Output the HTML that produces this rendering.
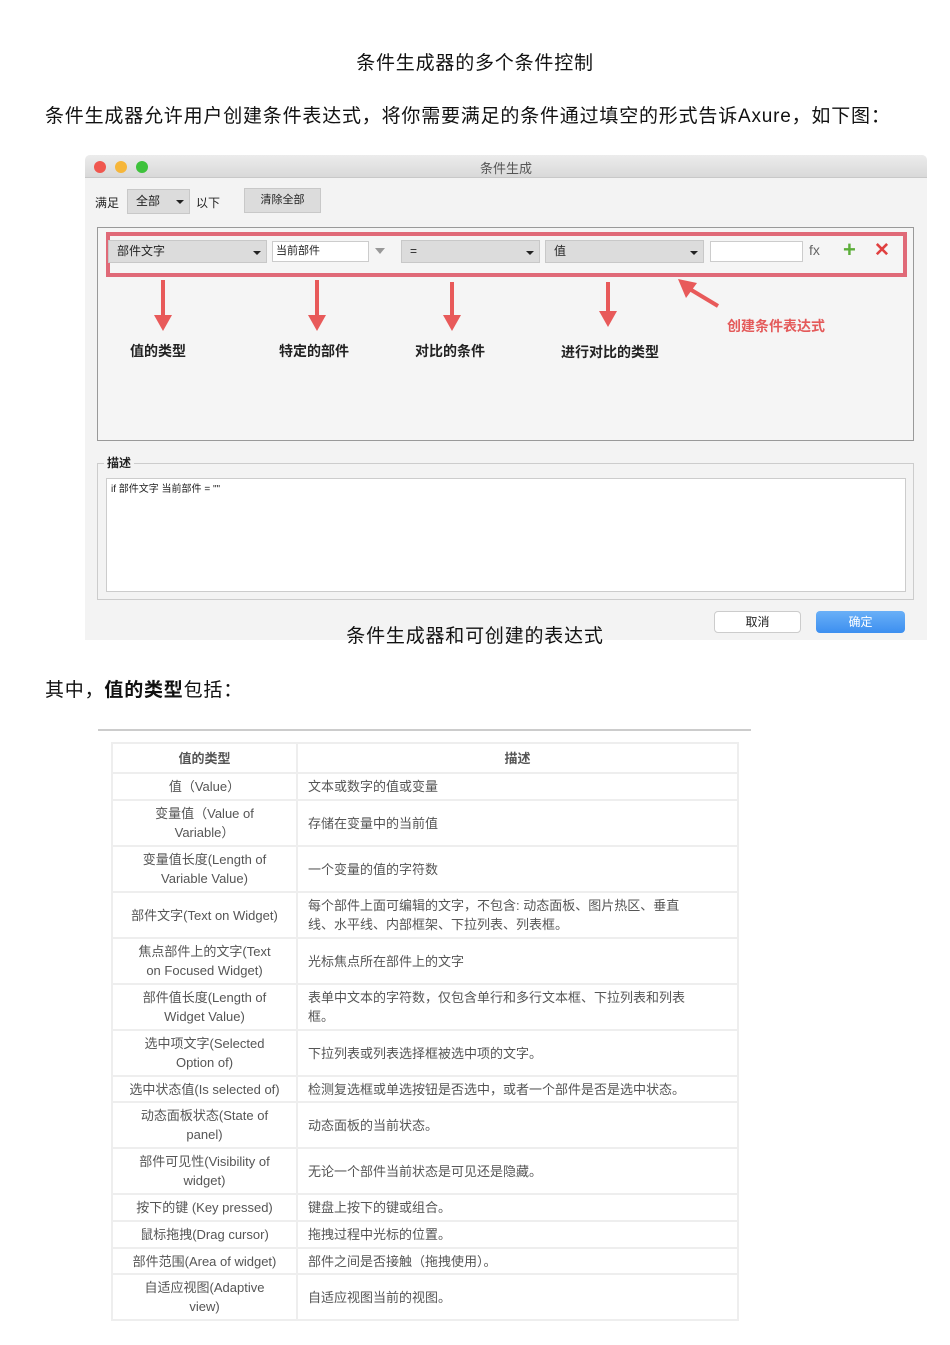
<!DOCTYPE html>
<html><head><meta charset="utf-8">
<style>
*{margin:0;padding:0;box-sizing:border-box}
body{width:950px;height:1345px;background:#fff;position:relative;font-family:"Liberation Sans","Noto Sans CJK SC",sans-serif;color:#111;overflow:hidden}
.a{position:absolute;white-space:nowrap}
.sel{position:absolute;background:#dcdcdc;border:1px solid #c8c8c8;font-size:12px;line-height:21px;padding-left:8px;color:#222}
.sel:after{content:"";position:absolute;right:5px;top:10px;border-left:4px solid transparent;border-right:4px solid transparent;border-top:4px solid #222}
.inp{position:absolute;background:#fff;border:1px solid #ccc;font-size:11px;line-height:18px;padding-left:3px;color:#222}
.lbl{position:absolute;font-size:14px;font-weight:bold;color:#222;white-space:nowrap}
table{position:absolute;left:111px;top:742px;width:628px;border-collapse:collapse;font-size:13px;color:#555}
td{border:2px solid #eee;padding:0 34px 0 10px;line-height:19px}
td:first-child{width:185px;text-align:center;padding:0 18px}
</style></head><body>
<div class="a" style="left:0;width:950px;text-align:center;top:48px;font-size:19px;letter-spacing:0.8px">条件生成器的多个条件控制</div>
<div class="a" style="left:45px;top:101px;font-size:19px;letter-spacing:0.8px">条件生成器允许用户创建条件表达式，将你需要满足的条件通过填空的形式告诉Axure，如下图：</div>

<div class="a" style="left:85px;top:155px;width:842px;height:485px;background:#f3f3f3;border-radius:5px 5px 0 0;overflow:hidden">
 <div class="a" style="left:0;top:0;width:842px;height:23px;background:linear-gradient(#ececec,#d9d9d9);border-bottom:1px solid #c8c8c8"></div>
 <div class="a" style="left:9px;top:6px;width:12px;height:12px;border-radius:50%;background:#f0574f"></div>
 <div class="a" style="left:30px;top:6px;width:12px;height:12px;border-radius:50%;background:#f6b63a"></div>
 <div class="a" style="left:51px;top:6px;width:12px;height:12px;border-radius:50%;background:#3ec23c"></div>
 <div class="a" style="left:0;width:842px;text-align:center;top:3px;font-size:13px;color:#555">条件生成</div>
 <div class="a" style="left:10px;top:39px;font-size:12px;color:#222">满足</div>
 <div class="sel" style="left:42px;top:34px;width:63px;height:25px;line-height:23px">全部</div>
 <div class="a" style="left:111px;top:39px;font-size:12px;color:#222">以下</div>
 <div class="a" style="left:159px;top:33px;width:77px;height:25px;background:#dcdcdc;border:1px solid #c8c8c8;font-size:11px;text-align:center;line-height:23px;color:#222">清除全部</div>
 <div class="a" style="left:12px;top:72px;width:817px;height:214px;border:1px solid #999;background:#f5f5f5"></div>
 <div class="a" style="left:21px;top:77px;width:801px;height:45px;border:4px solid #e06a78"></div>
 <div class="sel" style="left:23px;top:85px;width:159px;height:23px">部件文字</div>
 <div class="inp" style="left:187px;top:86px;width:97px;height:21px">当前部件</div>
 <div class="a" style="left:290px;top:93px;border-left:5px solid transparent;border-right:5px solid transparent;border-top:6px solid #999"></div>
 <div class="sel" style="left:316px;top:85px;width:139px;height:23px">=</div>
 <div class="sel" style="left:460px;top:85px;width:159px;height:23px">值</div>
 <div class="inp" style="left:625px;top:86px;width:93px;height:21px"></div>
 <div class="a" style="left:724px;top:87px;font-size:14px;color:#666">fx</div>
 <div class="a" style="left:758px;top:82px;font-size:22px;font-weight:bold;color:#5cae3a">+</div>
 <div class="a" style="left:789px;top:84px;font-size:19px;font-weight:bold;color:#e04040">✕</div>
 <svg class="a" style="left:0;top:0" width="842" height="220">
  <g stroke="#e85a5a" stroke-width="4" fill="#e85a5a">
   <line x1="78" y1="125" x2="78" y2="165"/><polygon points="69,160 87,160 78,176" stroke="none"/>
   <line x1="232" y1="125" x2="232" y2="165"/><polygon points="223,160 241,160 232,176" stroke="none"/>
   <line x1="367" y1="127" x2="367" y2="165"/><polygon points="358,160 376,160 367,176" stroke="none"/>
   <line x1="523" y1="127" x2="523" y2="161"/><polygon points="514,156 532,156 523,172" stroke="none"/>
   <line x1="633" y1="151" x2="603" y2="133"/><polygon points="593,124 612,128 601,143" stroke="none"/>
  </g>
 </svg>
 <div class="lbl" style="left:45px;top:186px">值的类型</div>
 <div class="lbl" style="left:194px;top:186px">特定的部件</div>
 <div class="lbl" style="left:330px;top:186px">对比的条件</div>
 <div class="lbl" style="left:476px;top:187px">进行对比的类型</div>
 <div class="lbl" style="left:642px;top:161px;color:#e45a5a">创建条件表达式</div>
 <div class="a" style="left:12px;top:308px;width:817px;height:137px;border:1px solid #ccc"></div>
 <div class="a" style="left:19px;top:299px;background:#f3f3f3;padding:0 3px;font-size:12px;font-weight:bold;color:#222">描述</div>
 <div class="a" style="left:21px;top:323px;width:800px;height:114px;background:#fff;border:1px solid #ccc"></div>
 <div class="a" style="left:26px;top:325px;font-size:10px;color:#222">if 部件文字 当前部件 = ""</div>
 <div class="a" style="left:629px;top:456px;width:87px;height:22px;background:#fff;border:1px solid #ccc;border-radius:4px;font-size:12px;text-align:center;line-height:20px;color:#222">取消</div>
 <div class="a" style="left:731px;top:456px;width:89px;height:22px;background:linear-gradient(#6ab0f7,#3c8ff0);border-radius:4px;font-size:12px;text-align:center;line-height:22px;color:#fff">确定</div>
</div>
<div class="a" style="left:0;width:950px;text-align:center;top:621px;font-size:19px;letter-spacing:0.8px">条件生成器和可创建的表达式</div>

<div class="a" style="left:45px;top:675px;font-size:19px;letter-spacing:0.8px">其中，<b>值的类型</b>包括：</div>
<div class="a" style="left:98px;top:729px;width:653px;height:2px;background:#ccc"></div>

<table>
<tr style="height:30px"><td><b>值的类型</b></td><td style="text-align:center;padding:0 10px"><b>描述</b></td></tr>
<tr style="height:27px"><td>值（Value）</td><td>文本或数字的值或变量</td></tr>
<tr style="height:46px"><td>变量值（Value of Variable）</td><td>存储在变量中的当前值</td></tr>
<tr style="height:46px"><td>变量值长度(Length of Variable Value)</td><td>一个变量的值的字符数</td></tr>
<tr style="height:46px"><td>部件文字(Text on Widget)</td><td>每个部件上面可编辑的文字，不包含: 动态面板、图片热区、垂直线、水平线、内部框架、下拉列表、列表框。</td></tr>
<tr style="height:46px"><td>焦点部件上的文字(Text on Focused Widget)</td><td>光标焦点所在部件上的文字</td></tr>
<tr style="height:46px"><td>部件值长度(Length of Widget Value)</td><td>表单中文本的字符数，仅包含单行和多行文本框、下拉列表和列表框。</td></tr>
<tr style="height:46px"><td>选中项文字(Selected Option of)</td><td>下拉列表或列表选择框被选中项的文字。</td></tr>
<tr style="height:26px"><td style="padding:0 4px">选中状态值(Is selected of)</td><td>检测复选框或单选按钮是否选中，或者一个部件是否是选中状态。</td></tr>
<tr style="height:46px"><td>动态面板状态(State of panel)</td><td>动态面板的当前状态。</td></tr>
<tr style="height:46px"><td>部件可见性(Visibility of widget)</td><td>无论一个部件当前状态是可见还是隐藏。</td></tr>
<tr style="height:27px"><td style="padding:0 4px">按下的键 (Key pressed)</td><td>键盘上按下的键或组合。</td></tr>
<tr style="height:27px"><td style="padding:0 4px">鼠标拖拽(Drag cursor)</td><td>拖拽过程中光标的位置。</td></tr>
<tr style="height:26px"><td style="padding:0 4px">部件范围(Area of widget)</td><td>部件之间是否接触（拖拽使用）。</td></tr>
<tr style="height:46px"><td>自适应视图(Adaptive view)</td><td>自适应视图当前的视图。</td></tr>
</table>
</body></html>
